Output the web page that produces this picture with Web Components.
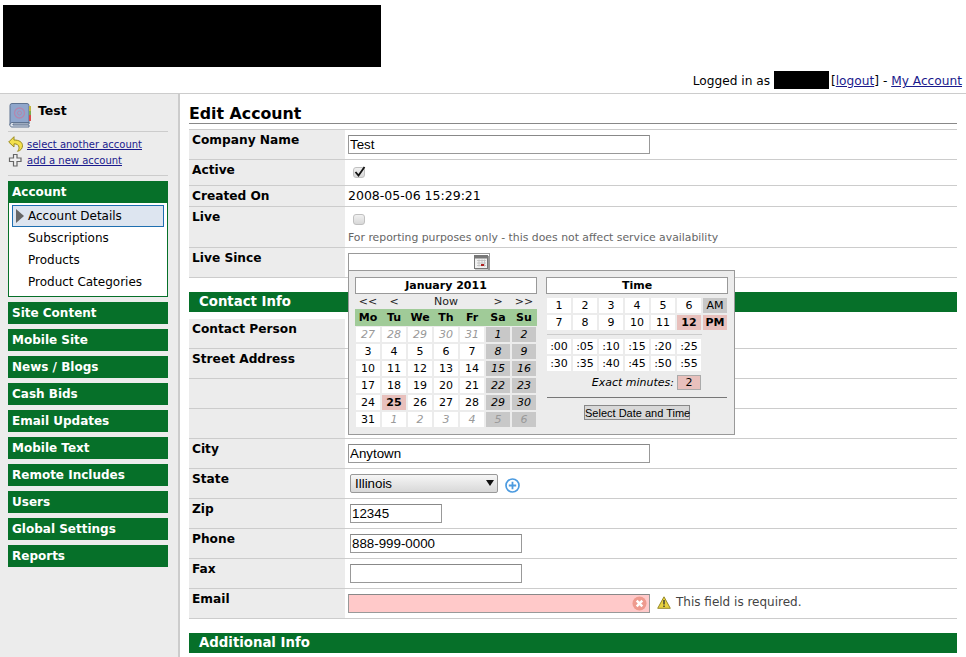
<!DOCTYPE html>
<html lang="en">
<head>
<meta charset="utf-8">
<title>Edit Account</title>
<style>
  html, body { margin: 0; padding: 0; background: #fff; height: 100%; overflow: hidden; }
  body { font: 12px "DejaVu Sans", sans-serif; color: #000; }
</style>
</head>
<body>
<app-page>
  <site-header slot="header"></site-header>
  <side-bar slot="side" account="Test">
    <nav-section title="Account" open>
      <nav-item selected>Account Details</nav-item>
      <nav-item>Subscriptions</nav-item>
      <nav-item>Products</nav-item>
      <nav-item>Product Categories</nav-item>
    </nav-section>
    <nav-section title="Site Content"></nav-section>
    <nav-section title="Mobile Site"></nav-section>
    <nav-section title="News / Blogs"></nav-section>
    <nav-section title="Cash Bids"></nav-section>
    <nav-section title="Email Updates"></nav-section>
    <nav-section title="Mobile Text"></nav-section>
    <nav-section title="Remote Includes"></nav-section>
    <nav-section title="Users"></nav-section>
    <nav-section title="Global Settings"></nav-section>
    <nav-section title="Reports"></nav-section>
  </side-bar>
  <edit-form slot="main"></edit-form>
</app-page>

<script>
function shadow(el, html) {
  el.attachShadow({ mode: 'open' }).innerHTML = html;
}

class AppPage extends HTMLElement {
  constructor() {
    super();
    shadow(this, `
      <style>
        :host { display: block; width: 966px; height: 657px; overflow: hidden; }
        .body { display: flex; height: 563px; }
      </style>
      <slot name="header"></slot>
      <div class="body">
        <slot name="side"></slot>
        <slot name="main"></slot>
      </div>`);
  }
}

class SiteHeader extends HTMLElement {
  constructor() {
    super();
    shadow(this, `
      <style>
        :host { display: block; height: 94px; box-sizing: border-box; padding-top: 5px; border-bottom: 1px solid #ccc; }
        .logo { width: 378px; height: 62px; background: #000; margin-left: 3px; }
        .login { height: 20px; margin-top: 4px; padding-right: 4px; text-align: right; font-size: 12.200px; line-height: 20px; white-space: nowrap; }
        .name { display: inline-block; width: 55px; height: 18px; background: #000; margin-right: 2px; vertical-align: -4px; }
        a { color: #1a1a8c; text-decoration: underline; }
      </style>
      <div class="logo"></div>
      <div class="login">Logged in as <span class="name"></span>[<a href="#">logout</a>] - <a href="#">My Account</a></div>`);
  }
}

class SideBar extends HTMLElement {
  constructor() {
    super();
    shadow(this, `
      <style>
        :host { display: block; width: 178px; flex: none; background: #ececec; border-right: 2px solid #ccc; height: 100%; box-sizing: content-box; }
        .inner { padding: 0 10px 0 8px; }
        .acct { display: flex; height: 38px; border-bottom: 1px solid #ccc; box-sizing: border-box; padding-top: 9px; }
        .acct svg { margin-left: 1px; flex: none; }
        .acct b { margin-left: 7px; font-size: 12.500px; line-height: 16px; }
        .links { height: 39px; border-bottom: 1px solid #ccc; margin-bottom: 5px; padding-top: 4px; font-size: 10px; }
        .link { display: flex; align-items: center; height: 16px; }
        .links svg { flex: none; width: 15px; height: 16px; margin-right: 4px; }
        a { color: #1a1a8c; }
      </style>
      <div class="inner">
        <div class="acct">
          <svg width="22" height="25" viewBox="0 0 22 25">
            <path d="M3 .5h15a2 2 0 0 1 2 2v18H4a2 2 0 0 0-3 1.500V2.500a2 2 0 0 1 2-2z" fill="#8fa6cc" stroke="#5f7391"/>
            <path d="M1 21.500a2 2 0 0 1 2-2h17v1.500H4v1h16v2H3a2 2 0 0 1-2-2.500z" fill="#dfe5ee" stroke="#5f7391"/>
            <rect x="20" y="3" width="2" height="5" fill="#c2b642"/>
            <rect x="20" y="8" width="2" height="4" fill="#7cab4e"/>
            <rect x="20" y="12" width="2" height="6" fill="#d94a4a"/>
            <circle cx="10.500" cy="10" r="5" fill="none" stroke="#b487ae" stroke-width="1.300"/>
            <circle cx="10.500" cy="10" r="2" fill="none" stroke="#b487ae"/>
          </svg>
          <b>${this.getAttribute('account')}</b>
        </div>
        <div class="links">
          <div class="link">
            <svg viewBox="0 0 15 16"><path d="M6 .7.7 6l5.300 5V7.800c3 0 4.800 1.200 5 3.500.1 1.700-.5 3-1.500 4 3.300-.6 5-3 5-5.500 0-3.800-3.500-5.800-8.500-5.800z" fill="#f4e04d" stroke="#9a8a1e"/></svg>
            <a href="#">select another account</a>
          </div>
          <div class="link">
            <svg viewBox="0 0 15 16"><path d="M5.500 2.500h3.500v3.500h4v3.500H9v4.500H5.500V9.500h-4V6h4z" fill="#f0f0f0" stroke="#666" stroke-width="1.200"/></svg>
            <a href="#">add a new account</a>
          </div>
        </div>
        <slot></slot>
      </div>`);
  }
}

class NavSection extends HTMLElement {
  constructor() {
    super();
    const open = this.hasAttribute('open');
    shadow(this, `
      <style>
        :host { display: block; width: 160px; margin-bottom: 5px; }
        .head { height: 22px; box-sizing: border-box; padding: 1px 0 0 4px; background: #067029; color: #fff; font-weight: bold; font-size: 12px; line-height: 21px; }
        .items { border: 1px solid #067029; border-top: 0; background: #fff; padding: 2px 3px 3px; height: 88px; }
      </style>
      <div class="head">${this.getAttribute('title')}</div>
      ${open ? '<div class="items"><slot></slot></div>' : ''}`);
  }
}

class NavItem extends HTMLElement {
  constructor() {
    super();
    const sel = this.hasAttribute('selected');
    shadow(this, `
      <style>
        :host { display: block; height: 22px; }
        .row { height: 22px; box-sizing: border-box; padding-left: 15px; line-height: 20px; font-size: 12px; border: 1px solid transparent; position: relative; }
        .sel { background: #dde5f0; border-color: #1f6fb0; }
        svg { position: absolute; left: 3px; top: 2px; }
      </style>
      <div class="row ${sel ? 'sel' : ''}">
        ${sel ? '<svg width="8" height="16" viewBox="0 0 8 16"><path d="M0 1l8 7-8 7z" fill="#666"/></svg>' : ''}
        <slot></slot>
      </div>`);
  }
}

class SectionHeading extends HTMLElement {
  constructor() {
    super();
    shadow(this, `
      <style>
        :host { display: block; height: 20px; margin: 14px 0 7px; background: #067029; color: #fff; font-weight: bold; font-size: 13.300px; line-height: 19px; padding-left: 10px; }
      </style>
      <slot></slot>`);
  }
}

class FormRow extends HTMLElement {
  constructor() {
    super();
    shadow(this, `
      <style>
        :host { display: grid; grid-template-columns: 156px 1fr; border-bottom: 1px solid #ccc; box-sizing: border-box; height: ${this.getAttribute('h') || 30}px; }
        .label { background: #ececec; padding: 2px 0 0 3px; font-weight: bold; font-size: 12.200px; line-height: 16px; }
        .value { padding-left: 3px; min-width: 0; }
      </style>
      <div class="label">${this.getAttribute('label') || ''}</div>
      <div class="value"><slot></slot></div>`);
  }
}

class TextField extends HTMLElement {
  constructor() {
    super();
    const w = this.getAttribute('w') || 302;
    const err = this.hasAttribute('error');
    shadow(this, `
      <style>
        :host { display: block; padding-top: 5px; }
        input { display: block; box-sizing: border-box; width: ${w}px; height: 19px; margin: 0; padding: 1px; border: 1px solid #999; border-top-color: #888; background: ${err ? '#ffc9c9' : '#fff'}; font: 13.330px "Liberation Sans", sans-serif; color: #000; outline: 0; }
        .wrap { display: flex; align-items: center; position: relative; }
        .x { position: absolute; left: 284px; top: 2px; }
        .msg { margin: 0 0 4px 7px; display: flex; align-items: center; font-size: 12px; color: #444; }
        .msg svg { margin-right: 5px; margin-top: 2px; }
      </style>
      <div class="wrap">
        <input type="text" value="${this.getAttribute('value') || ''}">
        ${err ? `<svg class="x" width="15" height="15" viewBox="0 0 15 15"><circle cx="7.500" cy="7.500" r="7" fill="#ee9a8e"/><path d="M4.700 4.700l5.600 5.600m0-5.600l-5.600 5.600" stroke="#fff" stroke-width="2.400"/></svg>
        <span class="msg"><svg width="14" height="13" viewBox="0 0 14 13"><path d="M7 .8.700 12.300h12.600z" fill="#e8d23e" stroke="#96892a" stroke-linejoin="round"/><path d="M7 4v4.500m0 1v1.500" stroke="#333" stroke-width="1.400"/></svg>${this.getAttribute('error')}</span>` : ''}
      </div>`);
  }
}

class CheckMark extends HTMLElement {
  constructor() {
    super();
    shadow(this, `
      <style>
        :host { display: block; padding: 7px 0 0 5px; }
        .box { width: 10px; height: 9px; border: 1px solid #c0c0c0; border-radius: 3px; background: linear-gradient(#f0f0f0, #d8d8d8); position: relative; }
        svg { position: absolute; left: 0; top: -3px; }
      </style>
      <div class="box">${this.hasAttribute('checked') ? '<svg width="12" height="13" viewBox="0 0 12 13"><path d="M1.500 7l3 3.500L10.500 2" fill="none" stroke="#111" stroke-width="1.800"/></svg>' : ''}</div>`);
  }
}

class StateSelect extends HTMLElement {
  constructor() {
    super();
    shadow(this, `
      <style>
        :host { display: flex; align-items: center; padding: 5px 0 0 2px; }
        .sel { position: relative; width: 148px; height: 19px; }
        select { appearance: none; -webkit-appearance: none; width: 148px; height: 19px; margin: 0; padding: 0 0 0 4px; border: 1px solid #999; border-radius: 2px; background: linear-gradient(#f6f6f6, #d8d8d8); font: 13.330px "Liberation Sans", sans-serif; color: #000; }
        .arrow { position: absolute; right: 4px; top: 6px; width: 0; height: 0; border: 4.500px solid transparent; border-top: 6px solid #111; border-bottom: 0; }
        svg { margin-left: 7px; margin-top: 4px; }
      </style>
      <div class="sel">
        <select><option>Illinois</option></select>
        <span class="arrow"></span>
      </div>
      <svg width="15" height="15" viewBox="0 0 15 15"><circle cx="7.500" cy="7.500" r="6.500" fill="#fff" stroke="#4c9be0" stroke-width="1.700"/><path d="M7.500 3.800v7.400M3.800 7.500h7.400" stroke="#4c9be0" stroke-width="1.800"/></svg>`);
  }
}

class DateField extends HTMLElement {
  constructor() {
    super();
    shadow(this, `
      <style>
        :host { display: block; padding-top: 5px; position: relative; }
        .box { width: 142px; height: 17px; box-sizing: border-box; border: 1px solid #999; border-bottom: 0; background: #fff; position: relative; }
        svg { position: absolute; right: 0; top: 1px; }
      </style>
      <div class="box">
        <svg width="15" height="15" viewBox="0 0 15 15">
          <rect x=".5" y=".5" width="13" height="13" fill="#f2f2f2" stroke="#777"/>
          <rect x="1" y="1" width="12" height="2.500" fill="#777"/>
          <path d="M3 5.500h9M3 8h9M3 10.500h9M5 4.500v7M8 4.500v7M10.500 4.500v7" stroke="#bbb" stroke-width=".8"/>
          <rect x="7" y="9" width="3" height="2" fill="#b02020"/>
          <path d="M14.500 1v14H1" fill="none" stroke="#999"/>
        </svg>
      </div>
      <slot></slot>`);
  }
}

class CalendarPopup extends HTMLElement {
  constructor() {
    super();
    const cell = (t, cls = '') => `<span class="c ${cls}">${t}</span>`;
    const days = [];
    [27, 28, 29, 30, 31].forEach(d => days.push(cell(d, 'other')));
    days.push(cell(1, 'we'), cell(2, 'we'));
    for (let d = 3; d <= 31; d++) {
      const col = (d + 4) % 7;
      days.push(cell(d, col >= 5 ? 'we' : (d === 25 ? 'on' : '')));
    }
    [1, 2, 3, 4].forEach(d => days.push(cell(d, 'other')));
    days.push(cell(5, 'we other'), cell(6, 'we other'));
    const head = ['Mo', 'Tu', 'We', 'Th', 'Fr', 'Sa', 'Su'].map(d => `<span>${d}</span>`).join('');
    const hours1 = [1, 2, 3, 4, 5, 6].map(h => cell(h)).join('') + cell('AM', 'grey');
    const hours2 = [7, 8, 9, 10, 11].map(h => cell(h)).join('') + cell(12, 'on') + cell('PM', 'on');
    const minuteCells = row => row.map(m => cell(':' + m)).join('') + '<i></i>';
    const mins = minuteCells(['00', '05', '10', '15', '20', '25']) + minuteCells(['30', '35', '40', '45', '50', '55']);
    shadow(this, `
      <style>
        :host { position: absolute; left: 0; top: 22px; width: 387px; height: 165px; box-sizing: border-box; display: flex; gap: 9px; padding: 6px 0 0 6px; background: #ececec; border: 1px solid #999; font-size: 11px; z-index: 5; }
        .col { width: 182px; flex: none; }
        .title { height: 17px; box-sizing: border-box; border: 1px solid #999; background: #fff; text-align: center; font-weight: bold; font-size: 11px; line-height: 15px; }
        .nav { display: grid; grid-template-columns: 26px 26px 1fr 26px 26px; height: 15px; line-height: 15px; text-align: center; color: #222; }
        .head { display: grid; grid-template-columns: repeat(7, 26px); height: 17px; background: #a0cb98; font-weight: bold; line-height: 17px; text-align: center; margin-bottom: 1px; }
        .grid { display: grid; grid-template-columns: repeat(7, 24px); grid-auto-rows: 15px; gap: 2px; padding-left: 1px; }
        .c { background: #fff; text-align: center; line-height: 15px; }
        .other { color: #999; font-style: italic; }
        .we { background: #c8c8c8; font-style: italic; color: #000; }
        .we.other { color: #999; }
        .on { background: #e8c0bc; font-weight: bold; }
        .grey { background: #c8c8c8; }
        .hours { margin-top: 4px; }
        .sep { height: 1px; background: #ccc; margin: 4px 0 4px 1px; width: 155px; }
        .exact { display: flex; justify-content: flex-end; align-items: center; height: 15px; margin-top: 4px; padding-right: 27px; font-style: italic; }
        .exact span { width: 24px; height: 15px; box-sizing: border-box; border: 1px solid #aaa; background: #e8c0bc; margin-left: 3px; text-align: center; line-height: 13px; font-style: normal; }
        .rule { height: 1px; background: #777; margin: 7px 0 7px 1px; width: 180px; }
        .btn { display: block; box-sizing: border-box; margin: 0 0 0 38px; width: 106px; height: 15px; padding: 0; border: 1px solid #888; background: #d8d8d8; font: 11px "Liberation Sans", sans-serif; color: #000; white-space: nowrap; }
      </style>
      <div class="col">
        <div class="title">January 2011</div>
        <div class="nav"><span>&lt;&lt;</span><span>&lt;</span><span>Now</span><span>&gt;</span><span>&gt;&gt;</span></div>
        <div class="head">${head}</div>
        <div class="grid">${days.join('')}</div>
      </div>
      <div class="col">
        <div class="title">Time</div>
        <div class="grid hours">${hours1}${hours2}</div>
        <div class="sep"></div>
        <div class="grid">${mins}</div>
        <div class="exact">Exact minutes:<span>2</span></div>
        <div class="rule"></div>
        <button class="btn">Select Date and Time</button>
      </div>`);
  }
}

class EditForm extends HTMLElement {
  constructor() {
    super();
    shadow(this, `
      <style>
        :host { display: block; flex: 1; min-width: 0; padding: 0 9px; }
        h1 { margin: 0; height: 30px; box-sizing: border-box; border-bottom: 1px solid #888; font-size: 15.800px; line-height: 39px; white-space: nowrap; }
        .gap { height: 6px; border-bottom: 1px solid #ccc; box-sizing: border-box; }
        .text { padding-top: 2px; font-size: 12.500px; line-height: 16px; }
        .hint { font-size: 10.850px; color: #666; margin-top: 6px; }
      </style>
      <h1>Edit Account</h1>
      <div class="gap"></div>
      <form-row label="Company Name" h="30"><text-field value="Test"></text-field></form-row>
      <form-row label="Active" h="26"><check-mark checked></check-mark></form-row>
      <form-row label="Created On" h="21"><div class="text">2008-05-06 15:29:21</div></form-row>
      <form-row label="Live" h="41"><check-mark></check-mark><div class="hint">For reporting purposes only - this does not affect service availability</div></form-row>
      <form-row label="Live Since" h="30"><date-field><calendar-popup></calendar-popup></date-field></form-row>
      <section-heading>Contact Info</section-heading>
      <form-row label="Contact Person"><text-field></text-field></form-row>
      <form-row label="Street Address"><text-field></text-field></form-row>
      <form-row><text-field></text-field></form-row>
      <form-row><text-field></text-field></form-row>
      <form-row label="City"><text-field value="Anytown"></text-field></form-row>
      <form-row label="State"><state-select></state-select></form-row>
      <form-row label="Zip"><text-field w="92" value="12345" style="padding-left:2px"></text-field></form-row>
      <form-row label="Phone"><text-field w="172" value="888-999-0000" style="padding-left:2px"></text-field></form-row>
      <form-row label="Fax"><text-field w="172" style="padding-left:2px"></text-field></form-row>
      <form-row label="Email"><text-field error="This field is required."></text-field></form-row>
      <section-heading>Additional Info</section-heading>`);
  }
}

customElements.define('app-page', AppPage);
customElements.define('site-header', SiteHeader);
customElements.define('side-bar', SideBar);
customElements.define('nav-section', NavSection);
customElements.define('nav-item', NavItem);
customElements.define('section-heading', SectionHeading);
customElements.define('form-row', FormRow);
customElements.define('text-field', TextField);
customElements.define('check-mark', CheckMark);
customElements.define('state-select', StateSelect);
customElements.define('date-field', DateField);
customElements.define('calendar-popup', CalendarPopup);
customElements.define('edit-form', EditForm);
</script>
</body>
</html>
